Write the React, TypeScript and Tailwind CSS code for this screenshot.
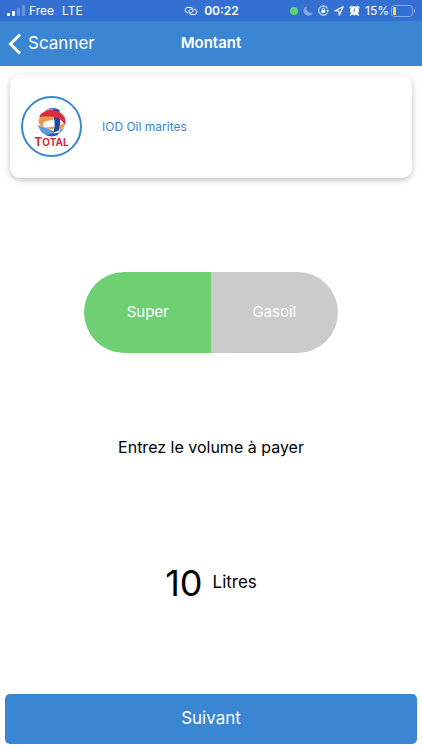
import { useState } from "react";

type Fuel = "Super" | "Gasoil";

const fuels: Fuel[] = ["Super", "Gasoil"];

const SignalBars = () => (
  <svg className="h-3 w-[18px]" viewBox="0 0 18 12" fill="#fff" aria-hidden="true">
    <rect x="0" y="8" width="3" height="3" rx="1" />
    <rect x="5" y="6" width="3" height="5" rx="1" />
    <rect x="10" y="3" width="3" height="8" rx="1" opacity="0.25" />
    <rect x="15" y="0" width="3" height="11" rx="1" opacity="0.25" />
  </svg>
);

const LinkIcon = () => (
  <svg
    className="h-2.5 w-[14px]"
    viewBox="0 0 14 10"
    fill="none"
    stroke="#fff"
    strokeWidth="1"
    strokeLinecap="round"
    aria-hidden="true"
  >
    <path d="M3.600 6.800A2.700 2.700 0 0 1 3.200 1.500h3.600a2.700 2.700 0 0 1 .6 5.200L6.300 6.900" />
    <path d="M10.400 3.200a2.700 2.700 0 0 1 .4 5.300H7.200a2.700 2.700 0 0 1-.6-5.200l1.100-.2" />
  </svg>
);

const MoonIcon = () => (
  <svg className="h-2.5 w-2.5" viewBox="0 0 10 10" fill="#83a8e6" aria-hidden="true">
    <path d="M3.600.3A4.900 4.900 0 1 0 9.900 6.600C5.500 7.600 2.400 4.500 3.600.3Z" />
  </svg>
);

const RotationLockIcon = () => (
  <svg className="h-[11px] w-[11px]" viewBox="0 0 11 11" fill="none" stroke="#fff" aria-hidden="true">
    <path d="M9.700 3.600A4.700 4.700 0 1 0 9.600 7.700" strokeWidth="1" />
    <path d="M8.300 5h2.700L9.700 6.900Z" fill="#fff" stroke="none" />
    <rect x="3.300" y="5" width="4" height="3" rx=".4" fill="#fff" stroke="none" />
    <path d="M4.200 5V4.100a1.100 1.100 0 0 1 2.200 0V5" strokeWidth=".8" />
  </svg>
);

const LocationIcon = () => (
  <svg
    className="h-2.5 w-2.5"
    viewBox="0 0 10 10"
    fill="none"
    stroke="#fff"
    strokeWidth="1.200"
    strokeLinejoin="round"
    aria-hidden="true"
  >
    <path d="M9.200.8.9 4.700l4 .4.400 4Z" />
  </svg>
);

const AlarmIcon = () => (
  <svg className="h-[11px] w-[11px]" viewBox="0 0 11 11" aria-hidden="true">
    <circle cx="5.500" cy="5.800" r="4.500" fill="#fff" />
    <path
      d="M1 2.800 2.700 1.200M10 2.800 8.300 1.200M2.300 9.300 1.700 10.200M8.700 9.300l.6.900"
      stroke="#fff"
      strokeWidth="1.400"
      strokeLinecap="round"
    />
    <path d="M5.700 3.400v2.600H3.800" fill="none" stroke="#3470d2" strokeWidth=".8" />
  </svg>
);

const BatteryIcon = () => (
  <svg className="h-3 w-[25px]" viewBox="0 0 25 12" aria-hidden="true">
    <rect x=".5" y=".5" width="21" height="11" rx="3" fill="none" stroke="#86a9e4" />
    <rect x="2" y="2" width="3" height="8" rx="1" fill="#fbd24d" />
    <path d="M23 4v4c1.600-.5 1.600-3.500 0-4Z" fill="#86a9e4" />
  </svg>
);

const TotalLogo = () => (
  <div className="flex h-[61px] w-[61px] shrink-0 flex-col items-center justify-center rounded-full border-2 border-[#3b86d2] bg-white">
    <svg className="h-[30px] w-[30px]" viewBox="0 0 30 30" aria-hidden="true">
      {/* dark blue band */}
      <path d="M11 2C15 .2 20 1 23.500 4L19 6l-5-2Z" fill="#24479f" />
      <path d="M8 3.500C10.500 1.500 14 1 17 2l-3 2.500Z" fill="#8da3d0" />
      <path d="M16.500 10c1.800 5 1.600 10.500-.5 15.500l5.500-1.500c2-4 2.300-9.500 1-14Z" fill="#24479f" />
      {/* light blue band */}
      <path d="M1 17.500C4.500 20.500 10.500 20.500 15 23.500c2 1.400 3 3 3 5C10 31 2.500 26 1 17.500Z" fill="#5b9bdc" />
      <path d="M9 28c4 1.800 8.500 1.500 12-.3l1.500-2.200-5.500 1Z" fill="#2c57a8" />
      {/* orange ring */}
      <path d="M5 9C-.5 13 .5 18.500 8 20.500 3.500 17 5.500 14 17 12.500L16 9.500C12 8.500 8 8 5 9Z" fill="#e79a48" />
      <path d="M7.500 20c4 .5 7.500.2 10-.5l-.8 2.700c-3 0-6.200-.7-9.200-2.200Z" fill="#e79a48" />
      <path d="M22.500 18.500c2.500-1 4.500-2.500 6-4.500 0 4.500-2 7.500-6.500 9Z" fill="#e79a48" />
      <path d="M23 22.800c1.700-.6 3-1.400 4.300-2.600-1 2.700-2.800 4.700-5.300 6Z" fill="#5b9bdc" />
      {/* red band */}
      <path d="M2 10.500C4 4.500 11.500 2 18 3.500c6 1.400 10.300 5.300 10.700 11l-.9 3C25 13 21.500 11 15.500 9.800 10.500 8.700 6 9 2 10.500Z" fill="#dc2b40" />
    </svg>
    <span className="text-xs leading-[10px] font-bold text-[#d42a3f]">
      T<span className="text-[10px]">OTAL</span>
    </span>
  </div>
);

const StatusBar = () => (
  <div className="grid h-[21px] grid-cols-[1fr_auto_1fr] items-center bg-[#3470d2] pr-1.5 pl-[7px] text-xs text-white">
    <div className="flex items-center gap-1">
      <SignalBars />
      <span>Free</span>
      <span className="pl-1">LTE</span>
    </div>
    <div className="flex items-center gap-1.5">
      <LinkIcon />
      <span className="font-semibold">00:22</span>
    </div>
    <div className="flex items-center justify-end gap-[5px]">
      <span className="h-2 w-2 rounded-full bg-[#62d46e]" />
      <MoonIcon />
      <RotationLockIcon />
      <LocationIcon />
      <AlarmIcon />
      <span className="flex items-center gap-0.5">
        15%
        <BatteryIcon />
      </span>
    </div>
  </div>
);

export default function App() {
  const [fuel, setFuel] = useState<Fuel>("Super");
  const [volume, setVolume] = useState("10");

  return (
    <div className="flex min-h-screen flex-col bg-white font-['Inter','Liberation_Sans',sans-serif] text-black">
      <StatusBar />

      <header className="grid h-[45px] grid-cols-[1fr_auto_1fr] items-center bg-[#3b86d2] px-2 text-white">
        <button type="button" className="flex items-center gap-1.5 justify-self-start text-[17px]">
          <svg
            className="h-[22px] w-[14px]"
            viewBox="0 0 14 22"
            fill="none"
            stroke="#fff"
            strokeWidth="3"
            aria-hidden="true"
          >
            <path d="M12 1.500 2.500 11 12 20.500" />
          </svg>
          Scanner
        </button>
        <h1 className="text-[15px] font-semibold">Montant</h1>
      </header>

      <main className="flex flex-1 flex-col items-center">
        <section className="w-full px-2.5 pt-[9px]">
          <div className="flex h-[103px] items-center gap-5 rounded-[10px] bg-white px-[11px] shadow-[0_2px_6px_rgba(0,0,0,0.25)]">
            <TotalLogo />
            <span className="text-xs text-[#3b86d2]">IOD Oil marites</span>
          </div>
        </section>

        <div
          role="group"
          aria-label="Carburant"
          className="mt-[94px] flex h-[81px] w-3/5 overflow-hidden rounded-full"
        >
          {fuels.map((name) => (
            <button
              key={name}
              type="button"
              aria-pressed={fuel === name}
              onClick={() => setFuel(name)}
              className={`flex-1 text-[15px] text-white ${fuel === name ? "bg-[#6fcf73]" : "bg-[#cbcbcb]"}`}
            >
              {name}
            </button>
          ))}
        </div>

        <label htmlFor="volume" className="mt-[82px] text-base leading-6">
          Entrez le volume à payer
        </label>

        <div className="mt-[100px] mb-10 flex items-center justify-center gap-2.5">
          <input
            id="volume"
            type="text"
            inputMode="decimal"
            value={volume}
            onChange={(e) => setVolume(e.target.value)}
            className="field-sizing-content h-12 text-right text-4xl outline-none"
          />
          <span className="text-[17px]">Litres</span>
        </div>
      </main>

      <footer className="px-[5px] pb-1.5">
        <button type="button" className="h-[50px] w-full rounded-[5px] bg-[#3b86d2] text-[17px] text-white">
          Suivant
        </button>
      </footer>
    </div>
  );
}
